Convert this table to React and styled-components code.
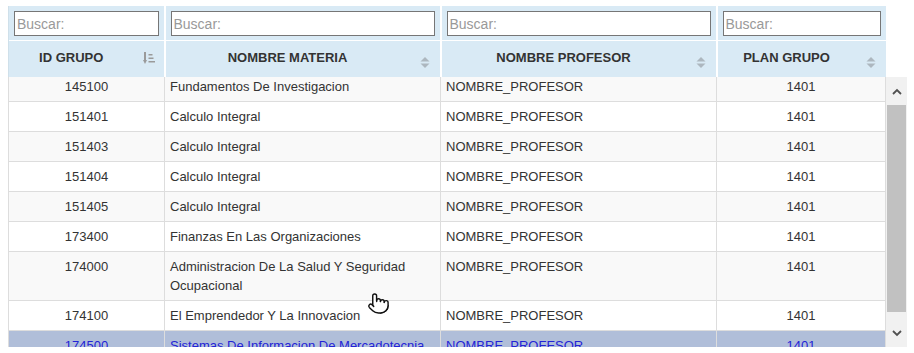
import styled, { createGlobalStyle } from "styled-components";
import { Pointer } from "lucide-react";

const GlobalStyle = createGlobalStyle`
  body {
    margin: 0;
    background: #fff;
    font-family: "Liberation Sans", Arial, sans-serif;
  }
`;

const columns = [
  { title: "ID GRUPO", width: 156, align: "center", sort: "desc" },
  { title: "NOMBRE MATERIA", width: 276, align: "left", sort: "both" },
  { title: "NOMBRE PROFESOR", width: 276, align: "left", sort: "both" },
  { title: "PLAN GRUPO", width: 169, align: "center", sort: "both" },
];

const rows = [
  ["145100", "Fundamentos De Investigacion", "NOMBRE_PROFESOR", "1401"],
  ["151401", "Calculo Integral", "NOMBRE_PROFESOR", "1401"],
  ["151403", "Calculo Integral", "NOMBRE_PROFESOR", "1401"],
  ["151404", "Calculo Integral", "NOMBRE_PROFESOR", "1401"],
  ["151405", "Calculo Integral", "NOMBRE_PROFESOR", "1401"],
  ["173400", "Finanzas En Las Organizaciones", "NOMBRE_PROFESOR", "1401"],
  ["174000", "Administracion De La Salud Y Seguridad Ocupacional", "NOMBRE_PROFESOR", "1401"],
  ["174100", "El Emprendedor Y La Innovacion", "NOMBRE_PROFESOR", "1401"],
  ["174500", "Sistemas De Informacion De Mercadotecnia", "NOMBRE_PROFESOR", "1401"],
];

const SortDesc = () => (
  <svg width="12" height="14" viewBox="0 0 12 14">
    <rect x="1" y="1" width="2" height="10" fill="#9a9a9a" />
    <polygon points="0,9 4,9 2,13" fill="#9a9a9a" />
    <rect x="5.5" y="3" width="4" height="1.5" fill="#9a9a9a" />
    <rect x="5.5" y="6.5" width="5" height="1.5" fill="#9a9a9a" />
    <rect x="5.5" y="10" width="6.5" height="1.5" fill="#9a9a9a" />
  </svg>
);

const SortBoth = () => (
  <svg width="10" height="13" viewBox="0 0 10 13">
    <polygon points="0.5,5.5 9.5,5.5 5,1" fill="#adb7bf" />
    <polygon points="0.5,7.5 9.5,7.5 5,12" fill="#adb7bf" />
  </svg>
);

const Chevron = ({ up }) => (
  <svg width="10" height="7" viewBox="0 0 10 7">
    <polyline
      points={up ? "1,6 5,2 9,6" : "1,1 5,5 9,1"}
      fill="none"
      stroke="#505050"
      strokeWidth="1.8"
    />
  </svg>
);

export default function App() {
  return (
    <>
      <GlobalStyle />
      <Page>
        <TableFrame>
          <HeadTable>
            <colgroup>
              {columns.map((c) => (
                <col key={c.title} style={{ width: c.width }} />
              ))}
            </colgroup>
            <thead>
              <tr>
                {columns.map((c) => (
                  <SearchCell key={c.title}>
                    <SearchInput placeholder="Buscar:" />
                  </SearchCell>
                ))}
              </tr>
              <tr>
                {columns.map((c) => (
                  <HeadCell key={c.title}>
                    {c.title}
                    <SortIcon $desc={c.sort === "desc"}>
                      {c.sort === "desc" ? <SortDesc /> : <SortBoth />}
                    </SortIcon>
                  </HeadCell>
                ))}
              </tr>
            </thead>
          </HeadTable>
          <BodyArea>
            <Viewport>
              <BodyTable>
                <colgroup>
                  {columns.map((c) => (
                    <col key={c.title} style={{ width: c.width }} />
                  ))}
                </colgroup>
                <tbody>
                  {rows.map((r, i) => (
                    <Row key={r[0]} $odd={i % 2 === 0} $selected={i === rows.length - 1}>
                      {r.map((v, j) => (
                        <Cell key={j} $align={columns[j].align}>
                          {v}
                        </Cell>
                      ))}
                    </Row>
                  ))}
                </tbody>
              </BodyTable>
            </Viewport>
            <Scrollbar>
              <ScrollButton>
                <Chevron up />
              </ScrollButton>
              <Thumb />
              <Track />
              <ScrollButton>
                <Chevron />
              </ScrollButton>
            </Scrollbar>
          </BodyArea>
        </TableFrame>
        <Cursor>
          <Pointer size={23} fill="#fff" color="#111" strokeWidth={1.5} />
        </Cursor>
      </Page>
    </>
  );
}

const Page = styled.div`
  position: relative;
  padding: 6px 0 0 8px;
  width: 914px;
  height: 353px;
  box-sizing: border-box;
  overflow: hidden;
`;

const TableFrame = styled.div`
  display: flex;
  flex-direction: column;
  width: 899px;
`;

const HeadTable = styled.table`
  width: 877px;
  table-layout: fixed;
  border-collapse: collapse;
  background: #d9eaf5;
`;

const SearchCell = styled.th`
  padding: 5px 5px 4px;
  border-left: 2px solid #fff;
  &:first-child {
    border-left: 1px solid #cfe0ea;
  }
`;

const SearchInput = styled.input`
  display: block;
  width: 100%;
  height: 25px;
  box-sizing: border-box;
  border: 1px solid #767676;
  background: #fff;
  padding: 0 2px;
  font-family: "Liberation Sans", Arial, sans-serif;
  font-size: 14px;
  color: #333;
  &::placeholder {
    color: #999;
  }
`;

const HeadCell = styled.th`
  position: relative;
  height: 36px;
  box-sizing: border-box;
  padding: 9px 40px 11px 10px;
  border-top: 1px solid #fff;
  border-left: 2px solid #fff;
  font-size: 13px;
  font-weight: bold;
  line-height: 16px;
  color: #333;
  text-align: center;
  &:first-child {
    border-left: 1px solid #cfe0ea;
  }
`;

const SortIcon = styled.span`
  position: absolute;
  right: ${(p) => (p.$desc ? "9px" : "10px")};
  top: ${(p) => (p.$desc ? "10px" : "15px")};
  display: flex;
`;

const BodyArea = styled.div`
  display: flex;
  height: 270px;
`;

const Viewport = styled.div`
  width: 878px;
  height: 270px;
  overflow: hidden;
`;

const BodyTable = styled.table`
  width: 878px;
  margin-top: -5px;
  table-layout: fixed;
  border-collapse: collapse;
  border-left: 1px solid #ddd;
  border-right: 1px solid #ddd;
`;

const Row = styled.tr`
  background: ${(p) => (p.$selected ? "#b0bed9" : p.$odd ? "#f9f9f9" : "#fff")};
  color: ${(p) => (p.$selected ? "#2323d6" : "#333")};
`;

const Cell = styled.td`
  padding: 5px 5px;
  vertical-align: top;
  text-align: ${(p) => p.$align};
  font-size: 13px;
  line-height: 19px;
  border-bottom: 1px solid #ddd;
  border-left: 1px solid #ddd;
  &:first-child {
    border-left: none;
  }
`;

const Scrollbar = styled.div`
  display: flex;
  flex-direction: column;
  width: 21px;
  height: 270px;
  background: #f1f1f1;
`;

const ScrollButton = styled.div`
  display: flex;
  align-items: center;
  justify-content: center;
  height: 28px;
  flex: none;
`;

const Thumb = styled.div`
  height: 207px;
  margin: 0 1px;
  background: #c1c1c1;
  flex: none;
`;

const Track = styled.div`
  flex: 1;
`;

const Cursor = styled.div`
  position: absolute;
  left: 367px;
  top: 292px;
  display: flex;
`;
